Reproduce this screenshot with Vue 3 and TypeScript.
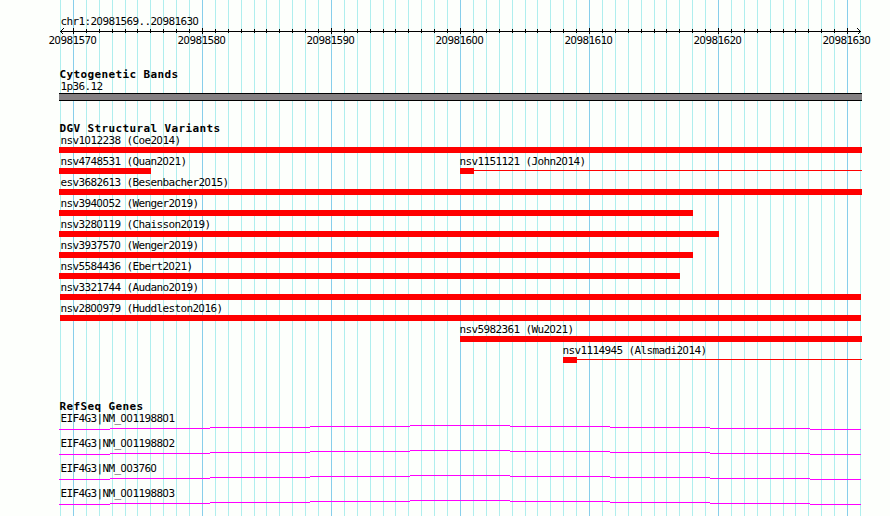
<script setup lang="ts">
interface Feature {
  name: string
  start: number
  end: number
  tail?: number
}

interface Segment {
  x: number
  y: number
  width: number
}

const firstBase = 20981569
const origin = 60.5
const basePitch = 800 / 62

const lines = Array.from({ length: 63 }, (_, i) => ({
  x: Math.floor(origin + i * basePitch),
  base: firstBase + i,
  major: (firstBase + i) % 10 === 0,
}))
const ticks = lines.slice(1, 62)
const majors = lines.filter((l) => l.major)

const variants: Feature[][] = [
  [{ name: 'nsv1012238 (Coe2014)', start: 59, end: 862 }],
  [
    { name: 'nsv4748531 (Quan2021)', start: 59, end: 151 },
    { name: 'nsv1151121 (John2014)', start: 460, end: 474, tail: 862 },
  ],
  [{ name: 'esv3682613 (Besenbacher2015)', start: 59, end: 862 }],
  [{ name: 'nsv3940052 (Wenger2019)', start: 59, end: 693 }],
  [{ name: 'nsv3280119 (Chaisson2019)', start: 59, end: 719 }],
  [{ name: 'nsv3937570 (Wenger2019)', start: 59, end: 693 }],
  [{ name: 'nsv5584436 (Ebert2021)', start: 59, end: 680 }],
  [{ name: 'nsv3321744 (Audano2019)', start: 60, end: 861 }],
  [{ name: 'nsv2800979 (Huddleston2016)', start: 60, end: 861 }],
  [{ name: 'nsv5982361 (Wu2021)', start: 460, end: 862 }],
  [{ name: 'nsv1114945 (Alsmadi2014)', start: 563, end: 577, tail: 862 }],
]

const genes = [
  'EIF4G3|NM_001198801',
  'EIF4G3|NM_001198802',
  'EIF4G3|NM_003760',
  'EIF4G3|NM_001198803',
]

const edges = [59, 110, 210, 310, 410, 510, 610, 710, 810, 861]
const intron: Segment[] = edges.slice(0, -1).map((x, i) => ({
  x,
  y: Math.abs(4 - i),
  width: edges[i + 1] - x,
}))

// Zeros are set in a face whose zero has no dot or slash.
const pieces = (s: string): string[] => s.split(/(0)/).filter((p) => p !== '')
const labelLeft = (f: Feature): number => (f.start < 61 ? 60.5 : f.start - 0.5)
</script>

<template>
  <main class="browser">
    <svg class="grid" width="890" height="516" shape-rendering="crispEdges">
      <rect
        v-for="l in lines"
        :key="l.base"
        :class="l.major ? 'major' : 'minor'"
        :x="l.x"
        y="0"
        width="1"
        height="516"
      />
    </svg>

    <div class="content">
      <section class="ruler">
        <div class="label inset"><span v-for="(p, i) in pieces('chr1:20981569..20981630')" :key="i" :class="{ zero: p === '0' }">{{ p }}</span></div>
        <svg class="axis" width="890" height="7" shape-rendering="crispEdges">
          <rect x="60" y="4" width="801" height="1" />
          <rect
            v-for="t in ticks"
            :key="t.base"
            :x="t.x"
            :y="t.major ? 1 : 2"
            width="1"
            :height="t.major ? 6 : 4"
          />
          <path d="M61 3h1v1h-1zM62 2h1v1h-1zM63 1h1v1h-1zM61 5h1v1h-1zM62 6h1v1h-1zM859 3h1v1h-1zM858 2h1v1h-1zM857 1h1v1h-1zM859 5h1v1h-1zM858 6h1v1h-1z" />
        </svg>
        <div class="overlay">
          <div v-for="m in majors" :key="m.base" class="label" :style="{ marginLeft: m.x - 24.5 + 'px' }"><span v-for="(p, i) in pieces(String(m.base))" :key="i" :class="{ zero: p === '0' }">{{ p }}</span></div>
        </div>
      </section>

      <section class="bands">
        <h2>Cytogenetic Bands</h2>
        <div class="label inset">1p36.12</div>
        <div class="band"></div>
      </section>

      <section class="variants">
        <h2>DGV Structural Variants</h2>
        <div v-for="(row, r) in variants" :key="r" class="row overlay">
          <div v-for="f in row" :key="f.name" class="feature">
            <div class="label" :style="{ marginLeft: labelLeft(f) + 'px' }"><span v-for="(p, i) in pieces(f.name)" :key="i" :class="{ zero: p === '0' }">{{ p }}</span></div>
            <div class="track" :style="{ marginLeft: f.start + 'px' }">
              <div class="bar" :style="{ width: f.end - f.start + 'px' }"></div>
              <div v-if="f.tail" class="tail" :style="{ width: f.tail - f.end + 'px' }"></div>
            </div>
          </div>
        </div>
      </section>

      <section class="genes">
        <h2>RefSeq Genes</h2>
        <div v-for="g in genes" :key="g" class="gene">
          <div class="label inset"><span v-for="(p, i) in pieces(g)" :key="i" :class="{ zero: p === '0' }">{{ p }}</span></div>
          <svg class="intron" width="890" height="5" shape-rendering="crispEdges">
            <rect v-for="s in intron" :key="s.x" :x="s.x" :y="s.y" :width="s.width" height="1" />
          </svg>
        </div>
      </section>
    </div>
  </main>
</template>

<style>
body {
  margin: 0;
  background: #fdfffc;
}
</style>

<style scoped>
.browser {
  position: relative;
  width: 890px;
  height: 516px;
  overflow: hidden;
  background: #fdfffc;
  color: #000;
  font-family: 'DejaVu Sans Mono', monospace;
  font-size: 11px;
}
.grid {
  position: absolute;
  inset: 0;
}
.minor {
  fill: #afeeee;
}
.major {
  fill: #87ceeb;
}
.content {
  position: relative;
  display: flex;
  flex-direction: column;
  padding-top: 15px;
}
.label {
  height: 12px;
  line-height: 14px;
  letter-spacing: -0.622px;
  white-space: pre;
}
.inset {
  margin-left: 60.5px;
}
.zero {
  font-family: Roboto, sans-serif;
  letter-spacing: -0.177px;
}
h2 {
  margin: 0 0 0 59.5px;
  height: 12px;
  font-size: 11px;
  line-height: 14px;
  font-weight: 700;
  letter-spacing: 0.378px;
  white-space: pre;
}
.axis,
.intron {
  display: block;
}
.overlay {
  display: grid;
}
.overlay > * {
  grid-area: 1 / 1;
}
.bands {
  margin-top: 22px;
}
.band {
  box-sizing: border-box;
  width: 803px;
  height: 8px;
  margin-top: 1px;
  margin-left: 59px;
  border: solid #000;
  border-width: 1px 0;
  background: #848082;
}
.variants {
  margin-top: 21px;
}
.row {
  height: 21px;
}
.track {
  display: flex;
  margin-top: 1px;
}
.bar {
  height: 6px;
  background: #f00;
}
.tail {
  height: 1px;
  margin-top: 2px;
  background: #f00;
}
.genes {
  margin-top: 35px;
}
.gene {
  height: 25px;
}
.gene .intron {
  margin-top: 1px;
  fill: #f0f;
}
</style>
